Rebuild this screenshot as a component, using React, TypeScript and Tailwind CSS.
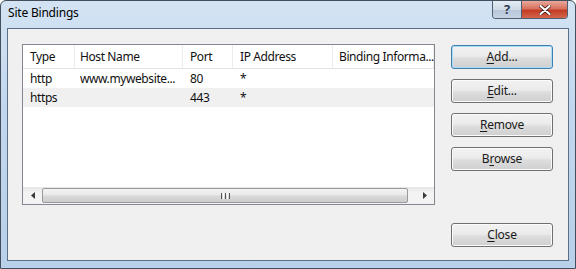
const font = { fontFamily: '"Noto Sans", "Open Sans", sans-serif' };

const columns = [
  { label: 'Type', w: 'w-[52px] pl-[7px]' },
  { label: 'Host Name', w: 'w-[108px] pl-[5px]' },
  { label: 'Port', w: 'w-[50px] pl-[7px]' },
  { label: 'IP Address', w: 'w-[100px] pl-[7px]' },
  { label: 'Binding Informa...', w: 'w-[101px] pl-[6px]' }
];

const rows = [
  { cells: ['http', 'www.mywebsite...', '80', '*', ''], shade: false },
  { cells: ['https', '', '443', '*', ''], shade: true }
];

const DlgButton = ({
  pre,
  hot,
  post,
  isDefault
}: {
  pre?: string;
  hot: string;
  post?: string;
  isDefault?: boolean;
}) => (
  <button
    className={`h-[24px] w-[102px] rounded-[3px] border text-[12px] leading-none text-[#1a1a1a] tracking-[-0.2px] bg-[linear-gradient(180deg,#f2f2f2_0%,#ebebeb_45%,#dddddd_55%,#cfcfcf_100%)] ${
      isDefault
        ? 'border-[#3c7fb1] shadow-[inset_0_0_0_1px_#a9dcf7]'
        : 'border-[#707070] shadow-[inset_0_0_0_1px_#fbfbfb]'
    }`}
  >
    {pre}
    <span className="underline underline-offset-2">{hot}</span>
    {post}
  </button>
);

export default function App() {
  return (
    <div
      className="w-[576px] h-[269px] flex flex-col rounded-t-[6px] border border-[#434f5c] bg-[linear-gradient(180deg,#d3e3f4_0%,#c2d7ee_40%,#b9d0ea_100%)] px-[6px] pb-[7px] text-[#111]"
      style={font}
    >
      {/* title bar */}
      <div className="h-[27px] flex items-start justify-between shrink-0">
        <span className="ml-[1px] mt-[4px] text-[12px] leading-[16px] tracking-[-0.2px] text-black">Site Bindings</span>
        <div className="flex mr-[1px] rounded-b-[4px] border border-t-0 border-[#4d5e72] overflow-hidden h-[18px]">
          <div className="w-[29px] h-full flex items-center justify-center border-r border-[#4d5e72] bg-[linear-gradient(180deg,#e4ebf3_0%,#cfdae6_50%,#b7c6d8_55%,#c6d4e4_100%)]">
            <span className="text-[13px] font-bold leading-none text-[#2f3e52]">?</span>
          </div>
          <div className="w-[45px] h-full flex items-center justify-center bg-[linear-gradient(180deg,#e8a89b_0%,#d8715f_45%,#c43c23_55%,#d3664c_100%)]">
            <svg width="12" height="10" viewBox="0 0 12 10">
              <path d="M1.5 1 L10.5 9 M10.5 1 L1.5 9" stroke="#3b1710" strokeWidth="3.6" strokeLinecap="round" />
              <path d="M1.5 1 L10.5 9 M10.5 1 L1.5 9" stroke="#ffffff" strokeWidth="2.2" strokeLinecap="round" />
            </svg>
          </div>
        </div>
      </div>

      {/* client area */}
      <div className="flex-1 flex border border-[#5d6f85] bg-[#f0f0f0] pl-[14px] pt-[15px] pb-[13px]">
        {/* list view */}
        <div className="w-[413px] h-[161px] flex flex-col border border-[#828790] bg-white text-[12px] tracking-[-0.4px] overflow-hidden">
          <div className="h-[24px] flex border-b border-[#e3e3e3] shrink-0">
            {columns.map((c) => (
              <div key={c.label} className={`${c.w} h-full flex items-center border-r border-[#ececec] whitespace-nowrap`}>
                {c.label}
              </div>
            ))}
          </div>
          {rows.map((r, i) => (
            <div key={i} className={`h-[19px] flex shrink-0 ${r.shade ? 'bg-[#f0f0f0]' : ''}`}>
              {r.cells.map((cell, j) => (
                <div key={j} className={`${columns[j].w} h-full flex items-center whitespace-nowrap overflow-hidden`}>
                  {cell}
                </div>
              ))}
            </div>
          ))}
          <div className="flex-1" />
          {/* horizontal scrollbar */}
          <div className="h-[17px] flex items-stretch shrink-0 bg-[linear-gradient(180deg,#e6e6e6_0%,#f3f3f3_30%,#f3f3f3_100%)]">
            <div className="w-[19px] flex items-center justify-center">
              <svg width="4" height="7" viewBox="0 0 4 7">
                <path d="M4 0 L0 3.5 L4 7 Z" fill="#3a3a3a" />
              </svg>
            </div>
            <div className="w-[366px] my-[1px] rounded-[2px] border border-[#999] bg-[linear-gradient(180deg,#f4f4f4_0%,#e9e9e9_45%,#d9d9d9_55%,#cdcdcd_100%)] flex items-center justify-center gap-[1px]">
              <span className="w-[1px] h-[6px] bg-[#555]" />
              <span className="w-[1px] h-[6px] bg-[#fff]" />
              <span className="w-[1px] h-[6px] bg-[#555]" />
              <span className="w-[1px] h-[6px] bg-[#fff]" />
              <span className="w-[1px] h-[6px] bg-[#555]" />
            </div>
            <div className="flex-1 flex items-center justify-end pr-[7px]">
              <svg width="4" height="7" viewBox="0 0 4 7">
                <path d="M0 0 L4 3.5 L0 7 Z" fill="#3a3a3a" />
              </svg>
            </div>
          </div>
        </div>

        {/* buttons */}
        <div className="ml-[16px] pt-[1px] flex flex-col gap-[10px]">
          <DlgButton hot="A" post="dd..." isDefault />
          <DlgButton hot="E" post="dit..." />
          <DlgButton hot="R" post="emove" />
          <DlgButton pre="B" hot="r" post="owse" />
          <div className="mt-auto">
            <DlgButton hot="C" post="lose" />
          </div>
        </div>
      </div>
    </div>
  );
}
